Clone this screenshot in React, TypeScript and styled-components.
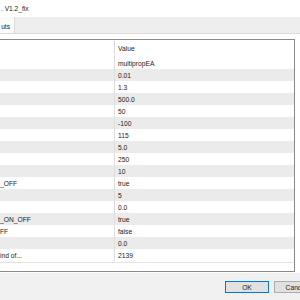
import React from "react";
import styled, { createGlobalStyle } from "styled-components";

const Global = createGlobalStyle`
  html, body { margin: 0; padding: 0; }
  body { background: #f0f0f0; font-family: "Liberation Sans", Arial, sans-serif; }
`;

const Window = styled.div`
  width: 300px;
  height: 300px;
  display: flex;
  flex-direction: column;
  overflow: hidden;
  background: #f0f0f0;
  color: #1a1a1a;
`;

const TitleBar = styled.div`
  height: 17px;
  background: #ffffff;
  display: flex;
  align-items: center;
  padding-left: 1px;
  font-size: 6.6px;
  white-space: pre;
  flex-shrink: 0;
`;

const TabStrip = styled.div`
  height: 16px;
  background: #eeeeee;
  border-bottom: 1px solid #dadada;
  display: flex;
  flex-shrink: 0;
`;

const Tab = styled.div`
  width: 15px;
  background: #fafafa;
  border-right: 1px solid #d9d9d9;
  display: flex;
  align-items: flex-end;
  justify-content: flex-end;
  padding-bottom: 3px;
  padding-right: 4px;
  font-size: 6.6px;
  box-sizing: border-box;
`;

const TabPage = styled.div`
  background: #ffffff;
  padding: 5px 5px 1px 0;
  height: 233px;
  display: flex;
  flex-shrink: 0;
`;

const List = styled.div`
  flex: 1;
  border: 1px solid #8a8a8a;
  border-left: none;
  display: flex;
  flex-direction: column;
  background: #ffffff;
  overflow: hidden;
`;

const Row = styled.div<{ $alt?: boolean; $h?: number }>`
  height: ${(p) => p.$h ?? 12}px;
  display: grid;
  grid-template-columns: 115px 1fr;
  background: ${(p) => (p.$alt ? "#ebebeb" : "#ffffff")};
  font-size: 6.7px;
  flex-shrink: 0;
`;

const NameCell = styled.div`
  border-right: 1px solid #dedede;
  display: flex;
  align-items: center;
  white-space: pre;
  overflow: hidden;
`;

const ValueCell = styled.div`
  display: flex;
  align-items: center;
  padding-left: 3px;
  white-space: pre;
`;

const ListEnd = styled.div`
  margin-top: 1px;
  border-top: 1px solid #e3e3e3;
  flex: 1;
`;

const Footer = styled.div`
  flex: 1;
  display: flex;
  align-items: flex-start;
  padding: 8px 0 0 225px;
  gap: 5px;
`;

const Button = styled.div<{ $primary?: boolean }>`
  width: ${(p) => (p.$primary ? 44 : 44)}px;
  height: 12px;
  box-sizing: border-box;
  flex-shrink: 0;
  border: 1px solid ${(p) => (p.$primary ? "#0078d7" : "#adadad")};
  background: #e1e1e1;
  display: flex;
  align-items: center;
  justify-content: center;
  font-size: 6.7px;
  color: #1a1a1a;
`;

const rows: [string, string][] = [
  ["", "multipropEA"],
  ["", "0.01"],
  ["", "1.3"],
  ["", "500.0"],
  ["", "50"],
  ["", "-100"],
  ["", "115"],
  ["", "5.0"],
  ["", "250"],
  ["", "10"],
  ["_OFF", "true"],
  ["", "5"],
  ["", "0.0"],
  ["_ON_OFF", "true"],
  ["FF", "false"],
  ["", "0.0"],
  ["ind of...", "2139"],
];

export default function App() {
  return (
    <>
      <Global />
      <Window>
        <TitleBar>. V1.2_fix</TitleBar>
        <TabStrip>
          <Tab>uts</Tab>
        </TabStrip>
        <TabPage>
          <List>
            <Row $h={17}>
              <NameCell />
              <ValueCell>Value</ValueCell>
            </Row>
            {rows.map(([n, v], i) => (
              <Row key={i} $alt={i % 2 === 1}>
                <NameCell>{n}</NameCell>
                <ValueCell>{v}</ValueCell>
              </Row>
            ))}
            <ListEnd />
          </List>
        </TabPage>
        <Footer>
          <Button $primary>OK</Button>
          <Button>Cancel</Button>
        </Footer>
      </Window>
    </>
  );
}
